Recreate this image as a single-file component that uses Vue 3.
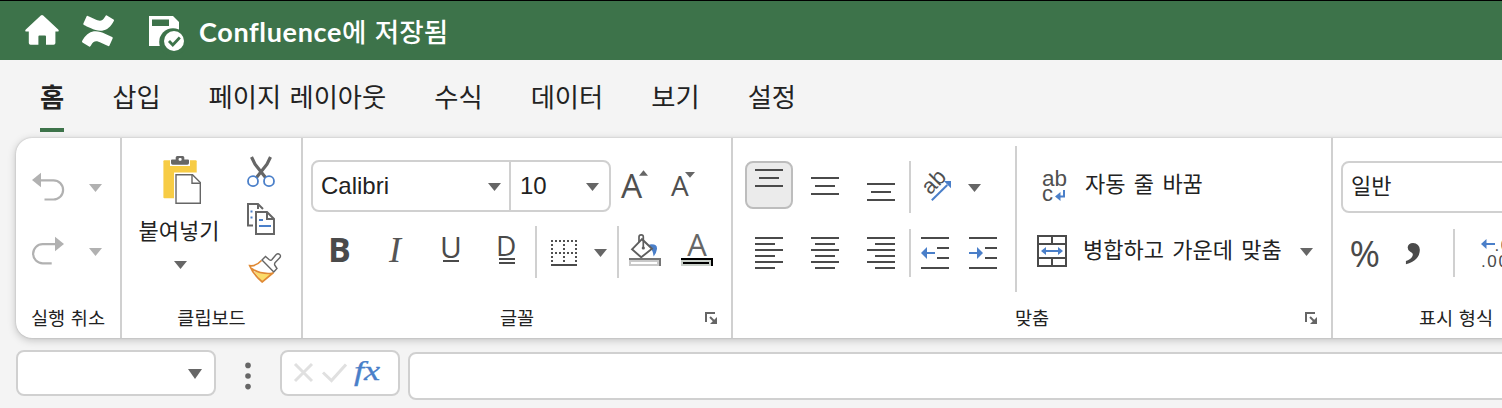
<template>
  <div class="app">
    <header class="topbar">
      <svg class="home" viewBox="0 0 34 30" width="34" height="30" fill="#fff"><path d="M15.8.5a1.8 1.8 0 0 1 2.4 0L33.2 14.4c1 1 .6 2.1-.7 2.1H30.400V28a1.800 1.800 0 0 1-1.800 1.800H21V21.500a1 1 0 0 0-1-1h-5.600a1 1 0 0 0-1 1v8.300H5.600A1.800 1.800 0 0 1 3.800 28V16.500H1.500C.2 16.500-.2 15.400.8 14.400z"/></svg>
      <svg class="confluence" viewBox="0 0 24 24" width="32" height="32" fill="#fff"><path d="M.87 18.257c-.248.382-.53.875-.763 1.245a.764.764 0 0 0 .255 1.04l4.965 3.054a.764.764 0 0 0 1.058-.26c.199-.332.454-.763.733-1.221 1.967-3.247 3.945-2.853 7.508-1.146l4.957 2.337a.764.764 0 0 0 1.028-.382l2.364-5.346a.764.764 0 0 0-.382-1 599.851 599.851 0 0 1-4.965-2.361C10.911 10.97 5.224 11.185.87 18.257zM23.131 5.743c.249-.405.531-.875.764-1.25a.764.764 0 0 0-.256-1.034L18.675.404a.764.764 0 0 0-1.058.26c-.195.335-.451.763-.734 1.225-1.966 3.246-3.945 2.85-7.508 1.146L4.418.698a.764.764 0 0 0-1.028.382L1.026 6.426a.764.764 0 0 0 .382 1c1.046.494 3.13 1.477 4.968 2.361 6.714 3.248 12.4 3.026 16.755-4.044z"/></svg>
      <svg class="saved" viewBox="0 0 36 36" width="36" height="36">
        <path d="M0 0H24L30 6V30H0z" fill="#fff"/>
        <rect x="3" y="3.500" width="17" height="6.500" fill="#3d734a"/>
        <circle cx="24" cy="26" r="13.800" fill="#3d734a"/>
        <circle cx="25" cy="25" r="10" fill="#fff"/>
        <path d="M20 25l3.800 4 7-7.500" fill="none" stroke="#3d734a" stroke-width="2.800"/>
      </svg>
      <span class="status"><span class="product">Confluence</span>에 저장됨</span>
    </header>

    <nav class="tabs">
      <button v-for="tab in tabs" :key="tab" class="tab" :class="{ active: tab === activeTab }" @click="activeTab = tab">{{ tab }}</button>
    </nav>

    <section class="ribbon">
      <div class="group undo-group">
        <div class="rows">
          <div class="row">
            <svg width="32" height="52" fill="none" stroke="#b1b1b1" stroke-width="2.200"><path d="M8 20.300H21.500a9.600 9.600 0 0 1 0 19.200H12.500"/><path d="M0 20L9 12.700V27.300z" fill="#b1b1b1" stroke="none"/></svg>
            <svg class="caret dim" viewBox="0 0 13 8" width="13" height="8"><path d="M0 0H13L6.500 8z"/></svg>
          </div>
          <div class="row redo-row">
            <svg width="32" height="52" fill="none" stroke="#b1b1b1" stroke-width="2.200"><path d="M24 18.100H10.700a9.600 9.600 0 0 0 0 19.200H19.700"/><path d="M32 18L23 10.700V25.300z" fill="#b1b1b1" stroke="none"/></svg>
            <svg class="caret dim" viewBox="0 0 13 8" width="13" height="8"><path d="M0 0H13L6.500 8z"/></svg>
          </div>
        </div>
        <div class="label">실행 취소</div>
      </div>

      <div class="group clipboard-group">
        <div class="clipboard">
          <button class="paste">
            <svg class="paste-icon" width="40" height="50">
              <rect x="1.400" y="5.300" width="33.300" height="38" rx="1" fill="#f7cc45"/>
              <path d="M12 50V17.500H36V50z" fill="#fff"/>
              <rect x="8" y="3" width="20" height="8" fill="#fff"/>
              <path d="M9 5.500a1 1 0 0 1 1-1h3.700V2.500a1.500 1.500 0 0 1 1.500-1.500h5.600a1.500 1.500 0 0 1 1.500 1.500V4.500H26a1 1 0 0 1 1 1V8a1.700 1.700 0 0 1-1.700 1.700H10.700A1.700 1.700 0 0 1 9 8z" fill="#666"/>
              <rect x="16.600" y="3" width="3" height="2.800" rx="1" fill="#fff"/>
              <path d="M14 19.700H30.500L38.300 27.500V48.300H14z" fill="#fff" stroke="#666" stroke-width="1.400"/>
              <path d="M30 20V28.300H38" fill="none" stroke="#666" stroke-width="1.400"/>
            </svg>
            <span>붙여넣기</span>
            <svg class="caret" viewBox="0 0 13 8" width="13" height="8"><path d="M0 0H13L6.500 8z"/></svg>
          </button>
          <div class="clip-tools">
            <svg width="36" height="34" fill="none">
              <path d="M5.500 2L9 9.200 19.500 22.500M24.500 2L21 9.200 10.500 22.500" stroke="#666" stroke-width="3.200"/>
              <circle cx="7" cy="26.200" r="5" stroke="#4a7fc9" stroke-width="1.800"/>
              <circle cx="23" cy="26.200" r="5" stroke="#4a7fc9" stroke-width="1.800"/>
            </svg>
            <svg width="36" height="36" fill="none" stroke="#666" stroke-width="2">
              <path d="M7 24.500H2V3H12L17 8M12 3V8"/>
              <path d="M10 11H21L28 18V33H10z" fill="#fff"/>
              <path d="M21 11V18H28"/>
              <path d="M4.500 10.500h2M4.500 16.500h2M13 19h4M13 25h12" stroke="#4a7fc9"/>
            </svg>
            <svg width="36" height="34" fill="none" stroke-width="1.400">
              <path d="M8 20.500Q17 24 26.500 22.500L16.500 31z" fill="#fbdc6a"/>
              <path d="M15.500 9.500Q10 15.500 3.700 14.700Q7 23 16.300 31L27.500 21.500M5.500 17.500Q14 23.500 26 22.300" stroke="#e08a35" stroke-width="1.700"/>
              <path d="M16 9L19.500 5.500 23.300 8.800Q25 10 26.200 8.300L30.200 3.500Q32 2 33.700 3.500T33.500 7L29.200 11.500Q28 13 29 14.500L31 17.500 27.800 21z" fill="#fff" stroke="#666"/>
            </svg>
          </div>
        </div>
        <div class="label">클립보드</div>
      </div>

      <div class="group font-group">
        <div class="rows">
          <div class="row">
            <div class="combo">
              <div class="combo-part family">Calibri<svg class="caret" viewBox="0 0 13 8" width="13" height="8"><path d="M0 0H13L6.500 8z"/></svg></div>
              <div class="combo-part size">10<svg class="caret" viewBox="0 0 13 8" width="13" height="8"><path d="M0 0H13L6.500 8z"/></svg></div>
            </div>
            <svg class="grow" width="32" height="52" fill="#505050"><text class="glyph medium" x="0" y="38" font-size="33.500">A</text><path d="M18 15.700L22.500 10.300 27 15.700z" fill="#666"/></svg>
            <svg class="shrink" width="32" height="52" fill="#505050"><text class="glyph medium" x="0" y="36" font-size="28">A</text><path d="M14 12H24L19 17.700z" fill="#666"/></svg>
          </div>
          <div class="row">
            <svg class="bold" width="24" height="52" fill="#4a4a4a"><text class="glyph heavy" x="-2" y="36" font-size="34">B</text></svg>
            <svg class="italic" width="24" height="52" fill="#555"><text class="slanted" x="1" y="36" font-size="36">I</text></svg>
            <svg class="underline" width="24" height="52" fill="#4a4a4a"><text class="glyph" x="-2" y="32" font-size="30">U</text><path d="M1 34h16v2H1z"/></svg>
            <svg class="double" width="24" height="52" fill="#4a4a4a"><text class="glyph" x="-2" y="30" font-size="28">D</text><path d="M1 32h16v2H1zM1 36h16v2H1z"/></svg>
            <i class="sep sep-a"></i>
            <svg class="borders" width="26" height="52">
              <path d="M0 15H26M0 27H26" stroke="#505050" stroke-width="2" stroke-dasharray="2 2"/>
              <path d="M1 14V38M13 14V38M25 14V38" stroke="#505050" stroke-width="2" stroke-dasharray="2 2"/>
              <path d="M0 39H26" stroke="#4a4a4a" stroke-width="2"/>
            </svg>
            <svg class="caret" viewBox="0 0 13 8" width="13" height="8"><path d="M0 0H13L6.500 8z"/></svg>
            <i class="sep sep-b"></i>
            <svg class="fill" width="32" height="52" fill="none">
              <path d="M20.500 18.500Q28.500 17.500 28 23Q27.500 27 24.500 30.500Q24.500 25 20 20z" fill="#4a7fc9"/>
              <path d="M3 23.300L13 13.200 23 22.700 12.200 31.300z" fill="#fff" stroke="#5e5e5e" stroke-width="1.900"/>
              <path d="M10 16V11Q10 8.800 12.200 8.800T14.300 11V22.500" stroke="#5e5e5e" stroke-width="1.700"/>
              <circle cx="14.300" cy="22" r="1.600" fill="#5e5e5e"/>
              <path d="M0 32H32V40H0z" fill="#767676"/><path d="M0 34H30V40H0z" fill="#c9c9c9"/><path d="M2 36H28V38H2z" fill="#fff"/>
            </svg>
            <svg class="color" width="32" height="52">
              <text class="glyph" x="6.300" y="30" font-size="31" fill="#666">A</text>
              <path d="M0 32H32V40H0z" fill="#000"/><path d="M0 34H30V40H0z" fill="#c9d0c9"/><path d="M2 36H28V38H2z" fill="#000"/>
            </svg>
          </div>
        </div>
        <div class="label">글꼴<svg class="launcher" viewBox="0 0 12 12" width="12" height="12"><path d="M1 10V1H10" fill="none" stroke="#666" stroke-width="2"/><path d="M5 5l5 5" stroke="#666" stroke-width="2"/><path d="M12 5V12H5z" fill="#666"/></svg></div>
      </div>

      <div class="group align-group">
        <div class="align-body">
          <div class="rows align-rows">
            <div class="row">
              <button v-for="v in vertical" :key="v.name" class="valign" :class="{ pressed: v.name === 'top' }">
                <svg width="28" height="44" stroke="#4a4a4a" stroke-width="2"><path :d="v.d"/></svg>
              </button>
              <i class="sep sep-c"></i>
              <svg class="rotate" width="34" height="52">
                <text class="plain" transform="translate(8 35.500) rotate(-45)" x="0" y="0" font-size="22" fill="#505050">ab</text>
                <path d="M9.800 40.300L25.300 25" stroke="#4a7fc9" stroke-width="2"/><path d="M29 21V28.300L21.800 21z" fill="#4a7fc9"/>
              </svg>
              <svg class="caret" viewBox="0 0 13 8" width="13" height="8"><path d="M0 0H13L6.500 8z"/></svg>
            </div>
            <div class="row">
              <svg v-for="h in horizontal" :key="h.name" class="halign" width="28" height="52" stroke="#4a4a4a" stroke-width="2"><path :d="h.d"/></svg>
              <i class="sep sep-d"></i>
              <svg class="outdent" width="28" height="52" stroke="#4a4a4a" stroke-width="2"><path d="M0 12H28M16 22H28M16 32H28M0 42H28"/><path d="M5 27H14" stroke="#4a7fc9"/><path d="M0 27L6 21V33z" fill="#4a7fc9" stroke="none"/></svg>
              <svg class="indent" width="28" height="52" stroke="#4a4a4a" stroke-width="2"><path d="M0 12H28M16 22H28M16 32H28M0 42H28"/><path d="M0 27H9" stroke="#4a7fc9"/><path d="M14 27L8 21V33z" fill="#4a7fc9" stroke="none"/></svg>
            </div>
          </div>
          <div class="rows cell-rows">
            <div class="row">
              <svg class="wrap" width="30" height="52">
                <text class="plain" x="5" y="25.500" font-size="22.500" fill="#505050">ab</text>
                <text class="plain" x="5" y="41" font-size="22" fill="#505050">c</text>
                <path d="M22 36.500H27V30" fill="none" stroke="#4a7fc9" stroke-width="2"/><path d="M18 36.500L23.500 32V41z" fill="#4a7fc9"/>
              </svg>
              <span class="action wrap-text">자동 줄 바꿈</span>
            </div>
            <div class="row">
              <svg width="30" height="52" fill="none" stroke="#4a4a4a" stroke-width="2">
                <path d="M1 10H29V40H1zM1 18H29M1 32H29M15 10V18M15 32V40"/>
                <path d="M8 25H22" stroke="#4a7fc9"/><path d="M4 25L9 21V29zM26 25L21 21V29z" fill="#4a7fc9" stroke="none"/>
              </svg>
              <span class="action merge-text">병합하고 가운데 맞춤</span>
              <svg class="caret merge-caret" viewBox="0 0 13 8" width="13" height="8"><path d="M0 0H13L6.500 8z"/></svg>
            </div>
          </div>
        </div>
        <div class="label">맞춤<svg class="launcher" viewBox="0 0 12 12" width="12" height="12"><path d="M1 10V1H10" fill="none" stroke="#666" stroke-width="2"/><path d="M5 5l5 5" stroke="#666" stroke-width="2"/><path d="M12 5V12H5z" fill="#666"/></svg></div>
      </div>

      <div class="group number-group">
        <div class="rows">
          <div class="row number-format">일반</div>
          <div class="row">
            <svg class="percent" width="34" height="52" fill="#4a4a4a"><text class="glyph" x="-.5" y="40.500" font-size="37">%</text></svg>
            <svg class="comma" width="20" height="52" fill="#4a4a4a"><text class="serif" x="1" y="27" font-size="70">,</text></svg>
            <i class="sep sep-e"></i>
            <svg class="decimals" width="48" height="52">
              <path d="M4 18H14" stroke="#4a7fc9" stroke-width="2"/><path d="M0 18L5.500 13V23z" fill="#4a7fc9"/>
              <text class="plain digits" x="13.500" y="25" font-size="17" fill="#4a4a4a">.0</text>
              <text class="plain digits" x="0" y="41" font-size="17" fill="#4a4a4a">.00</text>
            </svg>
          </div>
        </div>
        <div class="label">표시 형식</div>
      </div>
    </section>

    <section class="formula-bar">
      <div class="name-box"><svg viewBox="0 0 14 10" width="14" height="10"><path d="M0 0H14L7 10z" fill="#666"/></svg></div>
      <svg class="dots" width="6" height="46" fill="#666"><circle cx="3" cy="15.400" r="2.800"/><circle cx="3" cy="26" r="2.800"/><circle cx="3" cy="36.600" r="2.800"/></svg>
      <div class="fx-box">
        <svg width="54" height="42" fill="none" stroke="#e0e0e0" stroke-width="3"><path d="M3 12L20 29M20 12L3 29M31 20.500L39.500 28.500 54 12.500"/></svg>
        <span class="fx">fx</span>
      </div>
      <div class="formula-input"></div>
    </section>
  </div>
</template>

<script setup>
import { ref } from 'vue'

const tabs = ['홈', '삽입', '페이지 레이아웃', '수식', '데이터', '보기', '설정']
const activeTab = ref('홈')

const vertical = [
  { name: 'top', d: 'M0 7H28M4 15H24M0 23H28' },
  { name: 'middle', d: 'M0 15H28M4 23H24M0 31H28' },
  { name: 'bottom', d: 'M0 21H28M4 29H24M0 37H28' },
]

const horizontal = [
  { name: 'left', d: 'M0 12H28M0 18H20M0 24H28M0 30H20M0 36H28M0 42H20' },
  { name: 'center', d: 'M0 12H28M4 18H24M0 24H28M4 30H24M0 36H28M4 42H24' },
  { name: 'right', d: 'M0 12H28M8 18H28M0 24H28M8 30H28M0 36H28M8 42H28' },
]
</script>

<style>
body {
  overflow: hidden;
  background: #f4f4f4;
}
</style>

<style scoped>
.app {
  width: 100%;
  height: 408px;
  overflow: hidden;
  background: #f4f4f4;
  color: #222;
  font-family: "Liberation Sans", "Noto Sans CJK KR", sans-serif;
}

.app * {
  box-sizing: border-box;
}

button {
  padding: 0;
  border: 0;
  background: none;
  color: inherit;
  font: inherit;
}

svg {
  display: block;
  flex: none;
  overflow: visible;
}

.topbar {
  display: flex;
  height: 60px;
  border-top: 1px solid #000;
  background: #3d734a;
}

.home {
  margin: 14px 0 0 25px;
}

.confluence {
  margin: 14px 0 0 23px;
}

.saved {
  margin: 15px 0 0 35px;
}

.status {
  margin: 0 0 0 14px;
  color: #fff;
  font-family: "Noto Sans CJK KR", sans-serif;
  font-size: 26.5px;
  font-weight: 500;
  line-height: 60px;
  word-spacing: 2.5px;
  white-space: nowrap;
}

.product {
  font-family: Lato, sans-serif;
  font-size: 27px;
  font-weight: 700;
  letter-spacing: 0.65px;
}

.tabs {
  display: flex;
  gap: 48px;
  height: 78px;
  padding-left: 40px;
}

.tab {
  height: 72px;
  padding-top: 4px;
  border-bottom: 4px solid transparent;
  font-family: "Noto Sans CJK KR", sans-serif;
  font-size: 26.3px;
  line-height: 64px;
  word-spacing: 2.4px;
  white-space: nowrap;
}

.tab.active {
  border-color: #3d734a;
  font-weight: 700;
}

.ribbon {
  display: flex;
  width: 1600px;
  height: 200px;
  margin-left: 16px;
  border-radius: 16px;
  background: #fff;
  box-shadow: 0 0 2px rgba(0, 0, 0, 0.2), 0 2px 8px rgba(0, 0, 0, 0.22);
}

.group {
  display: flex;
  flex: none;
  flex-direction: column;
  justify-content: space-between;
  border-right: 2px solid #d0d0d0;
}

.undo-group {
  width: 106px;
}

.clipboard-group {
  width: 181px;
}

.font-group {
  width: 430px;
}

.align-group {
  width: 600px;
}

.number-group {
  width: 248px;
}

.rows {
  display: flex;
  flex-direction: column;
  gap: 14px;
  padding-top: 22px;
}

.row {
  display: flex;
  align-items: center;
  height: 52px;
}

.label {
  position: relative;
  height: 40px;
  font-family: "Noto Sans CJK KR", sans-serif;
  font-size: 18.6px;
  line-height: 37px;
  text-align: center;
  word-spacing: 1.5px;
}

.launcher {
  position: absolute;
  right: 14px;
  top: 14px;
}

.caret {
  fill: #666;
}

.caret.dim {
  fill: #b1b1b1;
}

.undo-group .row {
  gap: 25px;
  padding: 4px 0 0 16px;
}

.undo-group .row > svg:first-child {
  margin-top: -4px;
}

.undo-group .redo-row {
  padding-top: 0;
}

.undo-group .redo-row > svg:first-child {
  margin-top: 0;
}

.clipboard {
  display: flex;
  gap: 25px;
  padding: 17px 0 0 15px;
}

.paste {
  display: flex;
  flex-direction: column;
  align-items: center;
  width: 84px;
  font-family: "Noto Sans CJK KR", sans-serif;
  font-size: 22px;
  line-height: 32px;
}

.paste-icon {
  margin-left: 6px;
}

.paste span {
  margin: 8px 0 16px;
}

.paste .caret {
  margin-left: 3px;
}

.clip-tools {
  display: flex;
  flex-direction: column;
  justify-content: space-between;
  height: 130px;
}

.clip-tools svg:nth-child(2) {
  margin-bottom: 2px;
}

.combo {
  display: flex;
  width: 300px;
  height: 52px;
  margin-left: 8px;
  border: 2px solid #d0d0d0;
  border-radius: 8px;
  font-size: 24px;
}

.combo-part {
  display: flex;
  align-items: center;
  justify-content: space-between;
  padding: 0 8px;
}

.combo-part .caret {
  margin-top: 2px;
}

.family {
  width: 198px;
  border-right: 2px solid #d0d0d0;
}

.size {
  flex: 1;
  padding: 0 10px 0 9px;
}

.grow {
  margin-left: 10px;
}

.shrink {
  margin-left: 18px;
}

.glyph {
  font-family: "Open Sans", sans-serif;
}

.medium {
  font-weight: 500;
}

.heavy {
  font-weight: 700;
}

.slanted {
  font-family: "Liberation Serif", serif;
  font-style: italic;
}

.plain {
  font-family: "Liberation Sans", sans-serif;
}

.serif {
  font-family: "Liberation Serif", serif;
  font-weight: 700;
}

.digits {
  letter-spacing: 1.6px;
}

.bold {
  margin-left: 27px;
}

.italic {
  margin-left: 34px;
}

.underline {
  margin-left: 30px;
}

.double {
  margin-left: 32px;
}

.sep {
  flex: none;
  width: 2px;
  height: 52px;
  background: #d0d0d0;
}

.sep-a {
  margin: 0 14px 0 13px;
}

.borders {
  margin-right: 17px;
}

.sep-b {
  margin: 0 10px;
}

.font-group .row > .caret {
  margin-top: 2px;
}

.color {
  margin-left: 20px;
}

.align-body {
  display: flex;
}

.align-rows {
  width: 284px;
  height: 154px;
  padding: 22px 0 0 12px;
  background: linear-gradient(#d0d0d0, #d0d0d0) right 8px / 2px 146px no-repeat;
}

.valign {
  width: 48px;
  height: 48px;
  margin: -2px 8px 0 0;
  padding: 0 8px;
  border: 2px solid transparent;
  border-radius: 8px;
}

.valign.pressed {
  border-color: #bdbdbd;
  background: #ebebeb;
}

.sep-c {
  margin: 2px 11px 0 -4px;
}

.rotate + .caret {
  margin: 4px 0 0 12px;
}

.halign {
  margin: 0 18px 0 10px;
}

.sep-d {
  height: 48px;
  margin: 2px 10px 0 -4px;
}

.indent {
  margin-left: 20px;
}

.cell-rows {
  padding-left: 20px;
}

.action {
  font-family: "Noto Sans CJK KR", sans-serif;
  font-size: 22px;
  line-height: 48px;
  word-spacing: 3.4px;
  white-space: nowrap;
}

.wrap-text {
  margin: -8px 0 0 18px;
}

.merge-text {
  margin: -8px 0 0 16px;
}

.merge-caret {
  margin-left: 18px;
}

.number-group .rows {
  padding-left: 8px;
}

.number-format {
  width: 240px;
  margin-top: 1px;
  margin-bottom: -1px;
  padding: 0 0 6px 8px;
  border: 2px solid #d0d0d0;
  border-radius: 8px;
  font-family: "Noto Sans CJK KR", sans-serif;
  font-size: 22px;
}

.percent {
  margin-left: 9px;
}

.comma {
  margin-left: 20px;
}

.sep-e {
  height: 48px;
  margin: 2px 26px 0 29px;
}

.formula-bar {
  display: flex;
  align-items: flex-start;
  width: 1600px;
  padding: 12px 0 0 16px;
}

.name-box,
.fx-box,
.formula-input {
  height: 46px;
  border: 2px solid #d0d0d0;
  border-radius: 8px;
  background: #fff;
}

.name-box {
  display: flex;
  align-items: center;
  justify-content: flex-end;
  width: 200px;
  padding: 2px 12px 0 0;
}

.dots {
  margin: 0 29px;
}

.fx-box {
  display: flex;
  width: 120px;
  margin-right: 8px;
  padding-left: 10px;
}

.fx {
  margin-left: 8px;
  color: #4a7fc9;
  font-family: "Liberation Serif", serif;
  font-size: 27.5px;
  font-style: italic;
  line-height: 38px;
  transform: scaleX(1.32);
  transform-origin: left;
  -webkit-text-stroke: 0.3px #4a7fc9;
}

.formula-input {
  flex: 1;
  height: 48px;
  margin-top: 2px;
}
</style>
